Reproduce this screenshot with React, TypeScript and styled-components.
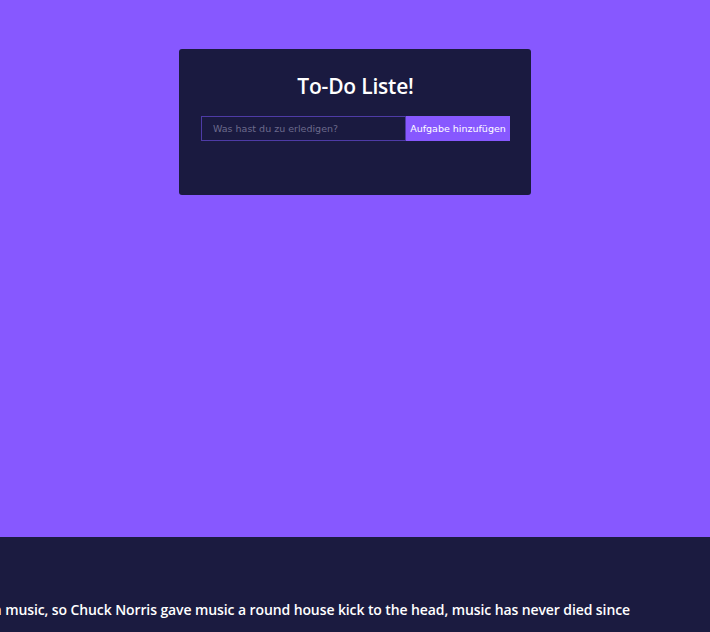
import * as React from "react";
import styled, { createGlobalStyle } from "styled-components";

const GlobalStyle = createGlobalStyle`
  body {
    margin: 0;
    background: #8758ff;
    font-family: "DejaVu Sans", "Open Sans", sans-serif;
  }
  * {
    box-sizing: border-box;
  }
`;

const Page = styled.div`
  display: flex;
  flex-direction: column;
  overflow: hidden;
`;

const Main = styled.main`
  height: 537px;
  display: flex;
  justify-content: center;
  align-items: flex-start;
  padding-top: 49px;
  background: #8758ff;
`;

const TodoWrapper = styled.div`
  width: 352px;
  background: #1a1a40;
  border-radius: 3px;
  padding: 22px 21px 22px 22px;
`;

const Title = styled.h1`
  margin: 0;
  color: #fff;
  font-family: "Open Sans", sans-serif;
  font-size: 21px;
  font-weight: 600;
  line-height: 30px;
  text-align: center;
  letter-spacing: -0.2px;
`;

const TodoForm = styled.form`
  display: flex;
  margin: 15px 0 32px;
`;

const TodoInput = styled.input`
  width: 205px;
  height: 25px;
  background: none;
  outline: none;
  border: 1px solid #4e3ba6;
  padding: 0 11px;
  color: #fff;
  font-family: inherit;
  font-size: 9.5px;

  &::placeholder {
    color: #6c6a8c;
  }
`;

const TodoButton = styled.button`
  width: 104px;
  height: 25px;
  background: #8758ff;
  color: #fff;
  border: none;
  padding: 0;
  font-family: inherit;
  font-size: 9.5px;
  cursor: pointer;
`;

const Footer = styled.footer`
  background: #1b1b40;
  height: 120px;
  padding: 63px 80px 0 0;
  display: flex;
  justify-content: flex-end;
  overflow: hidden;
`;

const Joke = styled.p`
  margin: 0;
  color: #fff;
  font-family: "Open Sans", sans-serif;
  font-size: 14px;
  font-weight: 600;
  white-space: nowrap;
  letter-spacing: -0.1px;
`;

export default function App() {
  const [task, setTask] = React.useState<string>("");

  const handleSubmit = (e: React.FormEvent) => {
    e.preventDefault();
    setTask("");
  };

  return (
    <Page>
      <GlobalStyle />
      <Main>
        <TodoWrapper>
          <Title>To-Do Liste!</Title>
          <TodoForm onSubmit={handleSubmit}>
            <TodoInput
              type="text"
              value={task}
              placeholder="Was hast du zu erledigen?"
              onChange={(e) => setTask(e.target.value)}
            />
            <TodoButton type="submit">Aufgabe hinzufügen</TodoButton>
          </TodoForm>
        </TodoWrapper>
      </Main>
      <Footer>
        <Joke>
          Death once had a near-Chuck Norris experience with music, so Chuck Norris gave music a round house kick to the head, music has never died since
        </Joke>
      </Footer>
    </Page>
  );
}
